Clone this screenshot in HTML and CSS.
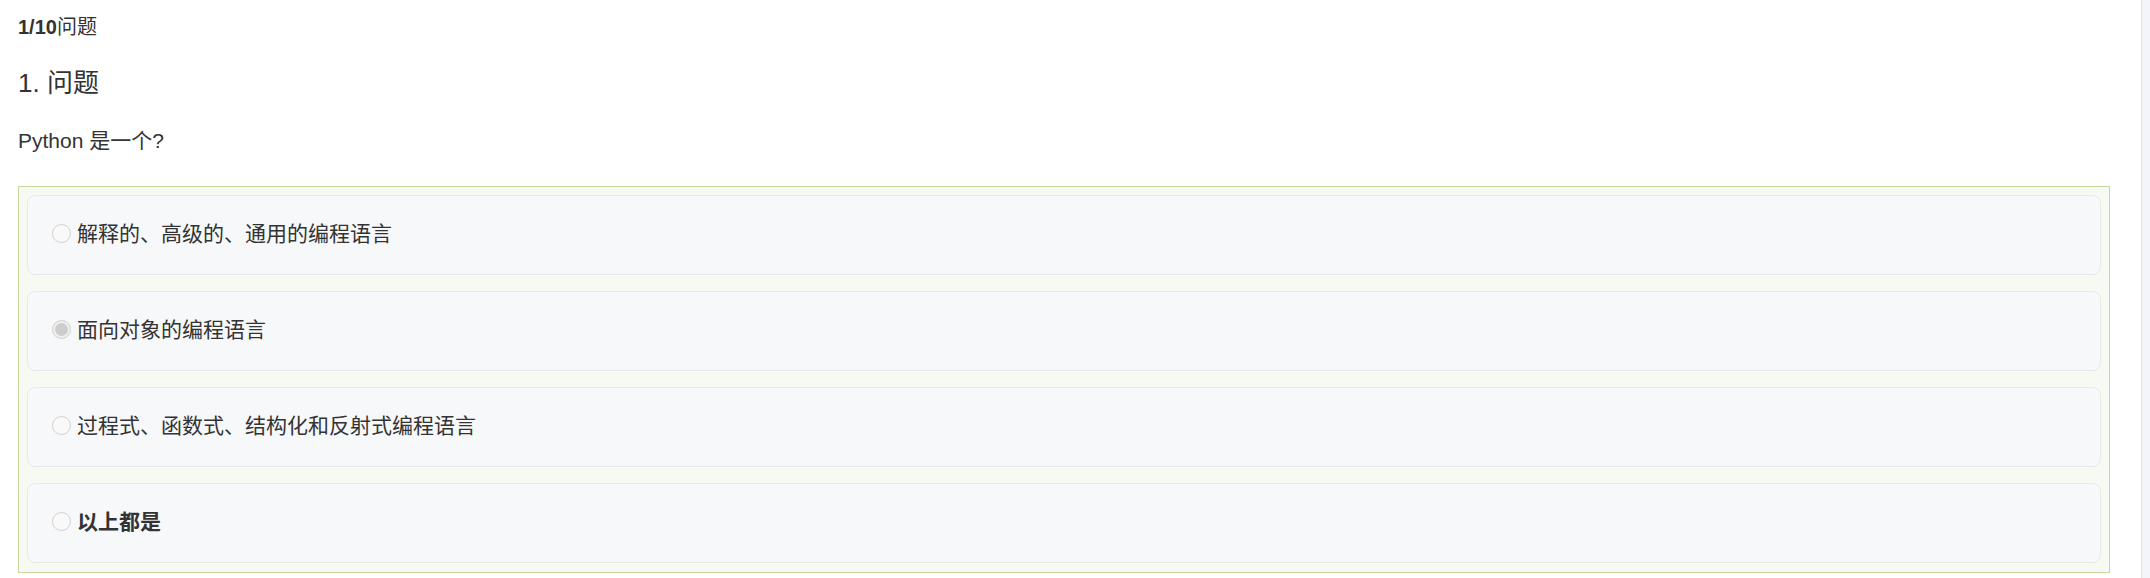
FILE: index.html
```html
<!DOCTYPE html>
<html lang="zh">
<head>
<meta charset="utf-8">
<title>问题</title>
<link rel="stylesheet" href="styles.css">
</head>
<body>
<div class="page">
  <main class="main">
    <p class="progress"><b>1/10</b>问题</p>
    <h2 class="title">1. 问题</h2>
    <p class="question">Python 是一个?</p>
    <div class="options">
      <label class="option"><span class="radio"></span><span class="text">解释的、高级的、通用的编程语言</span></label>
      <label class="option"><span class="radio checked"></span><span class="text">面向对象的编程语言</span></label>
      <label class="option"><span class="radio"></span><span class="text">过程式、函数式、结构化和反射式编程语言</span></label>
      <label class="option"><span class="radio"></span><span class="text bold">以上都是</span></label>
    </div>
  </main>
  <aside class="side"></aside>
</div>
</body>
</html>
```

FILE: styles.css
```css
html, body {
  margin: 0;
  padding: 0;
  background: #ffffff;
}
body {
  font-family: "Liberation Sans", "Noto Sans CJK SC", sans-serif;
  color: #333333;
  font-size: 21px;
}
.page {
  display: flex;
  height: 578px;
  overflow: hidden;
}
.main {
  flex: 1;
  padding: 12px 31px 0 18px;
}
.side {
  width: 8px;
  border-left: 1px solid #e2e1e4;
  background: #f4f4fb;
}
.progress {
  margin: 0;
  font-size: 20px;
  line-height: 30px;
}
.progress b {
  font-weight: bold;
}
.title {
  margin: 25px 0 0;
  font-size: 26px;
  font-weight: normal;
  line-height: 32px;
}
.question {
  margin: 26px 0 0;
  font-size: 21px;
  line-height: 32px;
}
.options {
  margin-top: 29px;
  border: 1px solid #c6d89e;
  background: #f7f9f3;
  padding: 8px 8px 9px;
  display: flex;
  flex-direction: column;
  gap: 16px;
}
.option {
  height: 80px;
  box-sizing: border-box;
  border: 1px solid #e6e9e6;
  border-radius: 8px;
  background: #f7f8fa;
  display: flex;
  align-items: center;
  padding: 0 0 3px 24px;
}
.radio {
  width: 19px;
  height: 19px;
  box-sizing: border-box;
  border: 1px solid #d2d2d2;
  border-radius: 50%;
  background: #f9f9f9;
  margin-right: 6px;
  display: flex;
  align-items: center;
  justify-content: center;
}
.radio.checked {
  background: #f0f0f0;
  border-color: #cfcfcf;
}
.radio.checked::after {
  content: "";
  width: 13px;
  height: 13px;
  border-radius: 50%;
  background: #cdcdcd;
}
.text {
  font-size: 21px;
  line-height: 30px;
}
.text.bold {
  font-weight: bold;
}
```
